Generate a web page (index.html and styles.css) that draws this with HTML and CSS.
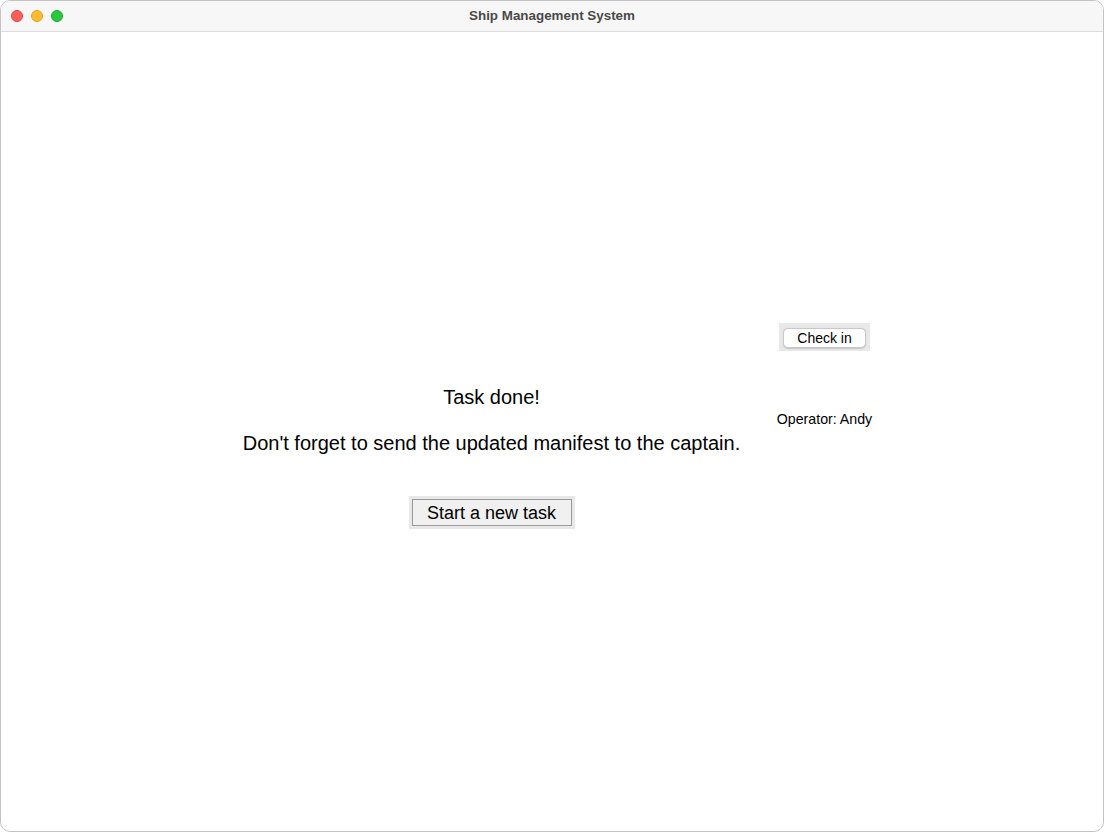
FILE: index.html
```html
<!DOCTYPE html>
<html>
<head>
<meta charset="utf-8">
<title>Ship Management System</title>
<link rel="stylesheet" href="styles.css">
</head>
<body>
<div class="window">
  <div class="titlebar">
    <div class="lights">
      <span class="light red"></span>
      <span class="light yellow"></span>
      <span class="light green"></span>
    </div>
    <div class="title">Ship Management System</div>
  </div>
  <div class="content">
    <div class="layout">
      <div class="main-col">
        <div class="heading">Task done!</div>
        <div class="message">Don't forget to send the updated manifest to the captain.</div>
        <div class="frame big-frame"><button class="btn big-btn">Start a new task</button></div>
      </div>
      <div class="side-col">
        <div class="frame small-frame"><button class="btn small-btn">Check in</button></div>
        <div class="operator">Operator: Andy</div>
      </div>
    </div>
  </div>
</div>
</body>
</html>
```
FILE: styles.css
```css
* { box-sizing: border-box; }
html, body {
  margin: 0;
  padding: 0;
  width: 1104px;
  height: 832px;
  background: #ffffff;
  font-family: "Liberation Sans", Arial, sans-serif;
  overflow: hidden;
}
.window {
  width: 1104px;
  height: 832px;
  border: 1px solid #c4c4c4;
  border-radius: 10px;
  overflow: hidden;
  display: flex;
  flex-direction: column;
  background: #ffffff;
}
.titlebar {
  height: 31px;
  flex: none;
  background: #f7f7f7;
  border-bottom: 1px solid #dcdcdc;
  display: flex;
  align-items: center;
  position: relative;
}
.lights {
  display: flex;
  gap: 8px;
  padding-left: 10px;
}
.light {
  width: 12px;
  height: 12px;
  border-radius: 50%;
  display: block;
}
.red { background: #fe5f57; border: 0.5px solid #e0443e; }
.yellow { background: #febc2e; border: 0.5px solid #dea123; }
.green { background: #28c840; border: 0.5px solid #1aab29; }
.title {
  position: absolute;
  left: 0;
  right: 0;
  top: 7px;
  text-align: center;
  font-size: 13.4px;
  line-height: 16px;
  font-weight: bold;
  color: #4a4a4a;
  pointer-events: none;
}
.content {
  flex: 1;
  display: flex;
}
.layout {
  display: flex;
  padding-left: 241px;
  gap: 36px;
}
.main-col {
  width: 499px;
  display: flex;
  flex-direction: column;
  align-items: center;
  padding-top: 353px;
}
.heading {
  font-size: 20px;
  line-height: 24px;
  color: #000;
}
.message {
  font-size: 20px;
  line-height: 24px;
  color: #000;
  margin-top: 22px;
  white-space: nowrap;
}
.side-col {
  width: 95px;
  display: flex;
  flex-direction: column;
  align-items: center;
  padding-top: 291px;
}
.frame {
  background: #e8e8e8;
  padding: 3px;
}
.small-frame {
  padding: 5px 4px 3px 4px;
}
.btn {
  font-family: "Liberation Sans", Arial, sans-serif;
  color: #000;
  margin: 0;
  cursor: default;
}
.small-btn {
  width: 83px;
  height: 20px;
  background: #ffffff;
  border: 1px solid #c8c8c8;
  border-radius: 5px;
  font-size: 14px;
  line-height: 18px;
  padding: 0;
  box-shadow: 0 0.5px 1px rgba(0,0,0,0.15);
}
.operator {
  font-size: 14.2px;
  line-height: 17px;
  margin-top: 60px;
  white-space: nowrap;
  color: #000;
}
.big-frame {
  margin-top: 41px;
}
.big-btn {
  width: 160px;
  height: 27px;
  background: #f0f0f0;
  border: 1px solid #9a9a9a;
  border-radius: 0;
  font-size: 18px;
  line-height: 23px;
  padding: 2px 0 0 0;
}
```
